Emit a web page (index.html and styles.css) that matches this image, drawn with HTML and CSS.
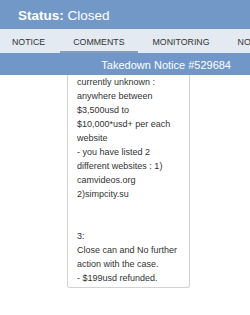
FILE: index.html
```html
<!DOCTYPE html>
<html lang="en">
<head>
    <meta charset="UTF-8">
    <meta name="viewport" content="width=device-width, initial-scale=1.0">
    <title>Takedown Notice</title>
    <link rel="stylesheet" href="styles.css">
</head>
<body>
    <div class="status-bar"><b>Status:</b> Closed</div>
    <nav class="tabs">
        <a href="#">NOTICE</a>
        <a href="#" class="active">COMMENTS</a>
        <a href="#">MONITORING</a>
        <a href="#">NOTES</a>
    </nav>
    <div class="title-bar">Takedown Notice #529684</div>
    <div class="content">
        <div class="comment">currently unknown :
anywhere between $3,500usd to $10,000*usd+ per each website
- you have listed 2 different websites : 1) camvideos.org 2)simpcity.su


3:
Close can and No further action with the case.
- $199usd refunded.</div>
    </div>
</body>
</html>
```
FILE: styles.css
```css
body {
    font-family: "Liberation Sans", Arial, sans-serif;
    background-color: #fff;
    margin: 0;
    overflow: hidden;
}
.status-bar {
    background-color: #7298c7;
    color: white;
    height: 29px;
    line-height: 31px;
    padding-left: 18px;
    font-size: 13.5px;
}
.tabs {
    background-color: #e4eaf1;
    height: 24px;
    display: flex;
    gap: 2px;
    white-space: nowrap;
    overflow: hidden;
    padding-left: 0;
}
.tabs a {
    color: #333;
    text-decoration: none;
    font-size: 8.8px;
    padding: 0 13px;
    line-height: 27px;
    box-sizing: border-box;
    height: 24px;
}
.tabs a:first-child {
    padding-left: 12px;
}
.tabs a.active {
    border-bottom: 2px solid #8a9eb5;
}
.title-bar {
    background-color: #7097c7;
    color: white;
    height: 22px;
    line-height: 24px;
    text-align: right;
    padding-right: 19px;
    font-size: 11px;
}
.comment {
    margin-left: 67px;
    width: 123px;
    box-sizing: border-box;
    border: 1px solid #d3d3d3;
    border-top: none;
    border-radius: 0 0 3px 3px;
    padding: 0 8px 2px 9px;
    font-size: 9px;
    line-height: 14px;
    color: #333;
    white-space: pre-line;
}
```
